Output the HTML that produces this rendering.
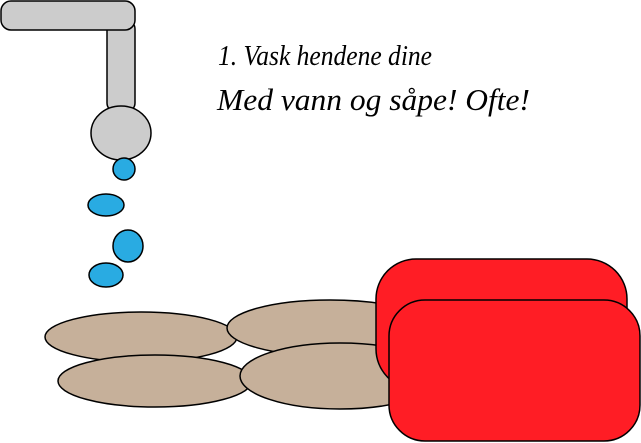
<!DOCTYPE html>
<html><head><style>html,body{margin:0;padding:0;background:#fff;width:641px;height:443px;overflow:hidden}</style></head>
<body>
<svg width="641" height="443" xmlns="http://www.w3.org/2000/svg" stroke="#000" stroke-width="1.5">
<rect x="107" y="20" width="28" height="92" rx="9" fill="#cccccc"/>
<rect x="1" y="1" width="134" height="29" rx="10" fill="#cccccc"/>
<ellipse cx="121" cy="133" rx="30" ry="27" fill="#cccccc"/>
<ellipse cx="124" cy="169" rx="11" ry="11" fill="#29abe2"/>
<ellipse cx="106" cy="205" rx="18" ry="11" fill="#29abe2"/>
<ellipse cx="128" cy="246" rx="15" ry="16" fill="#29abe2"/>
<ellipse cx="106" cy="275" rx="17" ry="12" fill="#29abe2"/>
<ellipse cx="141" cy="337" rx="96" ry="25" fill="#c6b09a"/>
<ellipse cx="330" cy="328" rx="103" ry="28" fill="#c6b09a"/>
<ellipse cx="155" cy="381" rx="97" ry="26" fill="#c6b09a"/>
<ellipse cx="340" cy="376" rx="100" ry="33" fill="#c6b09a"/>
<rect x="376" y="259" width="251" height="130" rx="40" fill="#ff1d25"/>
<rect x="389" y="300" width="251" height="141" rx="36" fill="#ff1d25"/>
<g stroke="none" fill="#000" font-family="Liberation Serif, serif" font-style="italic">
<text x="218" y="65" font-size="28" textLength="214" lengthAdjust="spacingAndGlyphs">1. Vask hendene dine</text>
<text x="217" y="110" font-size="31" textLength="313" lengthAdjust="spacingAndGlyphs">Med vann og såpe! Ofte!</text>
</g>
</svg>
</body></html>
